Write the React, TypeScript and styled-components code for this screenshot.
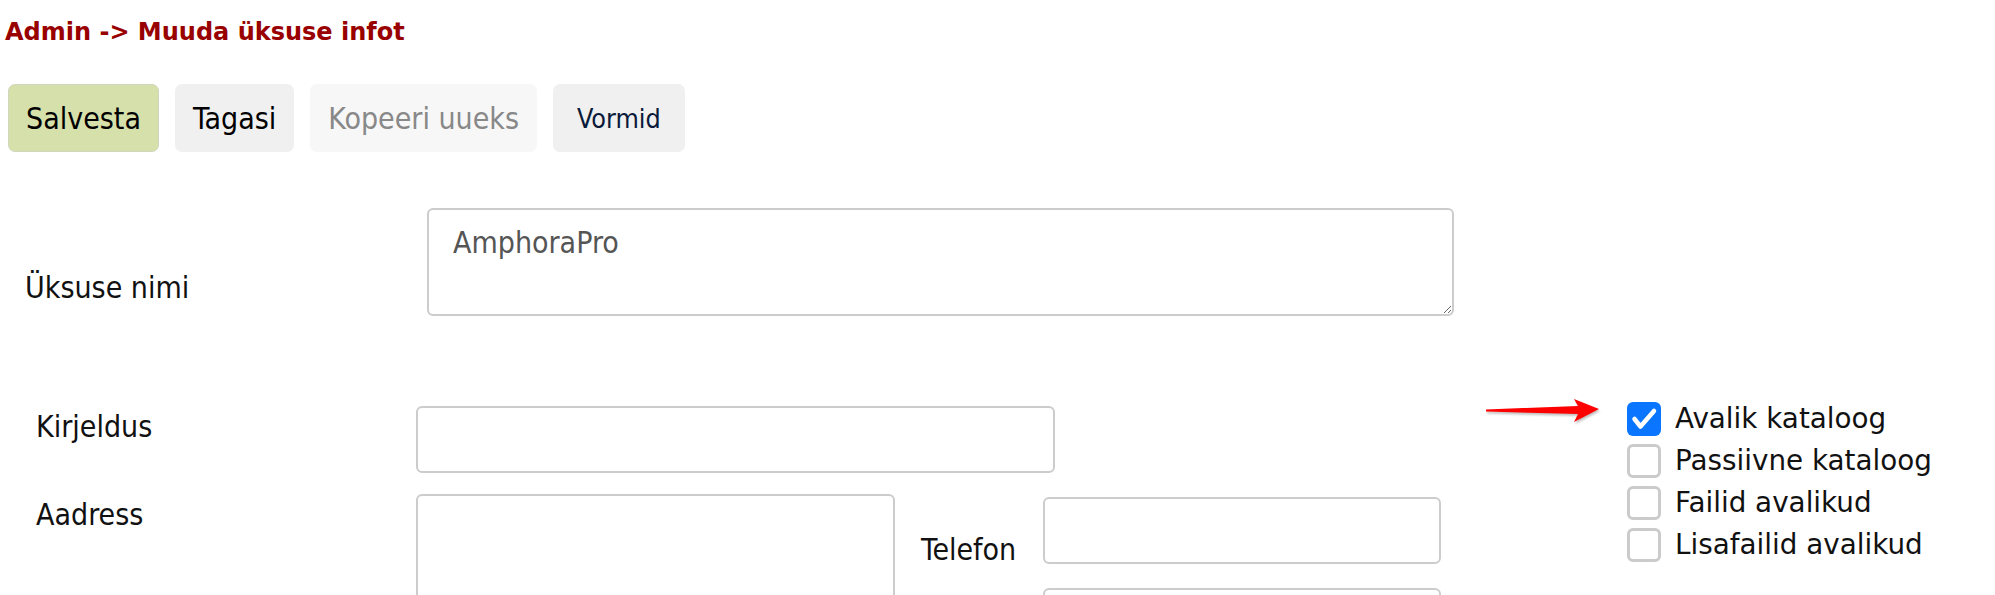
import React from 'react'
import styled, { createGlobalStyle } from 'styled-components'

const GlobalStyle = createGlobalStyle`
  body {
    margin: 0;
    background: #fff;
    font-family: 'DejaVu Sans Condensed', 'DejaVu Sans', sans-serif;
    font-stretch: condensed;
    color: #111;
  }
`

const Page = styled.div`
  width: 1995px;
  height: 595px;
  box-sizing: border-box;
  padding: 18px 0 0 5px;
  overflow: hidden;
`

const Title = styled.h1`
  margin: 0;
  font-family: 'DejaVu Sans', sans-serif;
  font-stretch: normal;
  font-size: 24px;
  line-height: 28px;
  font-weight: 700;
  color: #990000;
`

const Toolbar = styled.div`
  display: flex;
  gap: 16px;
  margin: 38px 0 0 3px;
`

type Variant = 'primary' | 'default' | 'disabled' | 'plain'

const Button = styled.button<{ $variant?: Variant }>`
  height: 68px;
  box-sizing: border-box;
  padding: 0 ${(p) => (p.$variant === 'plain' ? '23px' : '17px')};
  border-radius: 7px;
  border: 1px solid ${(p) => (p.$variant === 'primary' ? '#d2d6c0' : 'transparent')};
  font-family: inherit;
  font-stretch: condensed;
  font-size: ${(p) => (p.$variant === 'plain' ? '26.7px' : '30px')};
  background: ${(p) =>
    p.$variant === 'primary' ? '#d6e0aa' : p.$variant === 'disabled' ? '#f7f7f7' : '#f0f0f0'};
  color: ${(p) =>
    p.$variant === 'disabled' ? '#888' : p.$variant === 'plain' ? '#0b1a3a' : '#000'};
  cursor: pointer;
`

const NameRow = styled.div`
  display: grid;
  grid-template-columns: 402px 1027px;
  align-items: end;
  margin: 56px 0 0 20px;
`

const Label = styled.label`
  font-size: 30px;
  line-height: 36px;
  color: #111;
`

const NameLabel = styled(Label)`
  margin-bottom: 10px;
`

const Field = styled.textarea<{ $w: number; $h: number }>`
  display: block;
  width: ${(p) => p.$w}px;
  height: ${(p) => p.$h}px;
  box-sizing: border-box;
  padding: 15px 24px;
  border: 2px solid #cccccc;
  border-radius: 6px;
  font-family: inherit;
  font-stretch: condensed;
  font-size: 30px;
  line-height: 36px;
  color: #555;
  background: #fff;
`

const Input = styled.input<{ $w: number }>`
  display: block;
  width: ${(p) => p.$w}px;
  height: 67px;
  box-sizing: border-box;
  border: 2px solid #cccccc;
  border-radius: 6px;
  padding: 0 14px;
  font-family: inherit;
  font-size: 30px;
  background: #fff;
`

const Lower = styled.div`
  display: flex;
  gap: 44px;
  margin: 86px 0 0 31px;
`

const Form = styled.div`
  display: flex;
  flex-direction: column;
  gap: 21px;
  margin-top: 4px;
`

const FormRow = styled.div`
  display: grid;
  grid-template-columns: 380px auto auto;
  align-items: start;
`

const RowLabel = styled(Label)`
  padding-top: 3px;
`

const Contact = styled.div`
  display: grid;
  grid-template-columns: 101px 398px;
  column-gap: 21px;
  row-gap: 24px;
  margin: 3px 0 0 26px;
  align-items: end;
`

const ContactLabel = styled(Label)`
  margin-bottom: -4px;
`

const Side = styled.div`
  display: flex;
  gap: 27px;
  align-items: flex-start;
`

const Arrow = styled.svg`
  margin-top: -4px;
  filter: drop-shadow(1px 2px 1px rgba(0, 0, 0, 0.25));
`

const Checks = styled.div`
  display: flex;
  flex-direction: column;
  gap: 8px;
`

const Check = styled.label`
  display: flex;
  align-items: center;
  gap: 14px;
  font-family: 'DejaVu Sans', sans-serif;
  font-stretch: normal;
  font-size: 27.8px;
  line-height: 34px;
  color: #111;
`

const Box = styled.span<{ $on?: boolean }>`
  width: 34px;
  height: 34px;
  box-sizing: border-box;
  border-radius: 6px;
  border: ${(p) => (p.$on ? 'none' : '3px solid #cbcbcb')};
  background: ${(p) => (p.$on ? '#0a75ff' : '#fff')};
  display: flex;
`

const flags = [
  { label: 'Avalik kataloog', on: true },
  { label: 'Passiivne kataloog', on: false },
  { label: 'Failid avalikud', on: false },
  { label: 'Lisafailid avalikud', on: false },
]

export default function App() {
  return (
    <Page>
      <GlobalStyle />
      <Title>Admin -&gt; Muuda üksuse infot</Title>
      <Toolbar>
        <Button $variant='primary'>Salvesta</Button>
        <Button $variant='default'>Tagasi</Button>
        <Button $variant='disabled'>Kopeeri uueks</Button>
        <Button $variant='plain'>Vormid</Button>
      </Toolbar>

      <NameRow>
        <NameLabel>Üksuse nimi</NameLabel>
        <Field $w={1027} $h={108} defaultValue='AmphoraPro' />
      </NameRow>

      <Lower>
        <Form>
          <FormRow>
            <RowLabel>Kirjeldus</RowLabel>
            <Input $w={639} />
          </FormRow>
          <FormRow>
            <RowLabel>Aadress</RowLabel>
            <Field $w={479} $h={150} />
            <Contact>
              <ContactLabel>Telefon</ContactLabel>
              <Input $w={398} />
              <span />
              <Input $w={398} />
            </Contact>
          </FormRow>
        </Form>

        <Side>
          <Arrow width='115' height='26' viewBox='0 0 115 26'>
            <path d='M1 11.5 L93 8 L89 1 L114 11 L89 24 L93 16 L1 13.5 Z' fill='#ff0000' />
          </Arrow>
          <Checks>
            {flags.map((f) => (
              <Check key={f.label}>
                <Box $on={f.on}>
                  {f.on && (
                    <svg width='34' height='34' viewBox='0 0 34 34'>
                      <path
                        d='M7.5 17 L13.5 24.5 L27 9'
                        fill='none'
                        stroke='#fff'
                        strokeWidth='4.5'
                        strokeLinecap='round'
                        strokeLinejoin='round'
                      />
                    </svg>
                  )}
                </Box>
                {f.label}
              </Check>
            ))}
          </Checks>
        </Side>
      </Lower>
    </Page>
  )
}
